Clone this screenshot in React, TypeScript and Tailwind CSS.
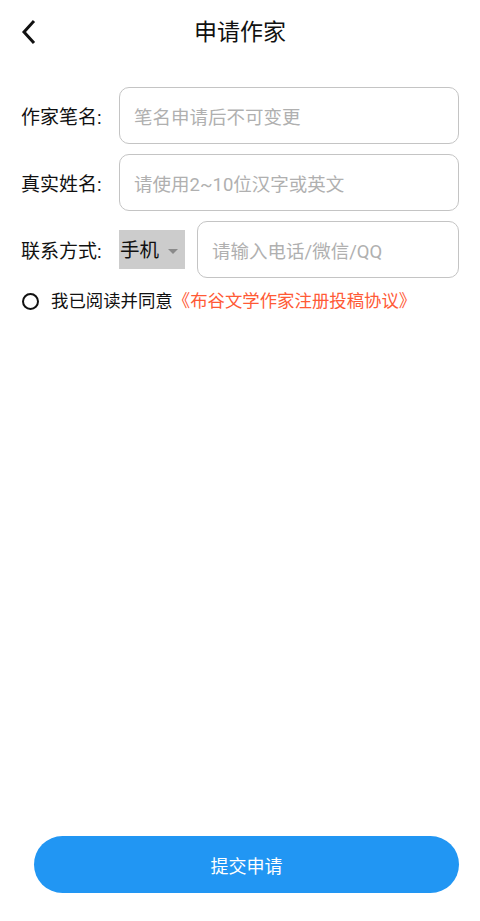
import React from "react";

const font = { fontFamily: 'Roboto, "Noto Sans CJK SC", "Noto Sans", sans-serif' };

function Row({ label, children }: { label: string; children: React.ReactNode }) {
  return (
    <div className="flex h-[57px] items-center pl-[21px] pr-[21px]">
      <div className="w-[98px] shrink-0 pt-[6px] text-[19px] text-[#111]">{label}</div>
      {children}
    </div>
  );
}

function Field({ placeholder }: { placeholder: string }) {
  return (
    <div className="flex h-full flex-1 items-center rounded-[10px] border border-[#c4c4c4] pl-[14px] pt-[6px] text-[18.5px] text-[#b0b0b0]">
      {placeholder}
    </div>
  );
}

export default function App() {
  return (
    <div className="flex h-[921px] w-[480px] flex-col bg-white" style={font}>
      <div className="relative flex h-[64px] items-center justify-center">
        <svg
          className="absolute left-[20px] top-[19px]"
          width="20"
          height="26"
          viewBox="0 0 20 26"
          fill="none"
          stroke="#111"
          strokeWidth="3"
          strokeLinecap="square"
        >
          <path d="M13 3 L4 13 L13 23" />
        </svg>
        <span className="pt-[3px] text-[23px] text-[#111]">申请作家</span>
      </div>

      <div className="mt-[23px] flex flex-col gap-[10px]">
        <Row label="作家笔名:">
          <Field placeholder="笔名申请后不可变更" />
        </Row>
        <Row label="真实姓名:">
          <Field placeholder="请使用2~10位汉字或英文" />
        </Row>
        <Row label="联系方式:">
          <div className="mr-[12px] flex h-[39px] w-[66px] shrink-0 items-center bg-[#cccccc] pl-[1px] pt-[3px]">
            <span className="text-[19.5px] text-[#111]">手机</span>
            <svg className="ml-[9px]" width="10" height="5" viewBox="0 0 10 5">
              <path d="M0 0 L10 0 L5 5 Z" fill="#8a8a8a" />
            </svg>
          </div>
          <Field placeholder="请输入电话/微信/QQ" />
        </Row>
      </div>

      <div className="mt-[8px] flex h-[30px] items-center pl-[22px]">
        <div className="h-[17px] w-[17px] rounded-full border-2 border-[#111]" />
        <span className="ml-[12px] text-[17.4px] text-[#111]">我已阅读并同意</span>
        <span className="text-[17.4px] text-[#ff5a36]">《布谷文学作家注册投稿协议》</span>
      </div>

      <div className="flex-1" />

      <div className="mb-[28px] ml-[34px] mr-[21px] flex h-[57px] items-center justify-center rounded-full bg-[#2196f3] pt-[3px]">
        <span className="text-[18px] text-white">提交申请</span>
      </div>
    </div>
  );
}
